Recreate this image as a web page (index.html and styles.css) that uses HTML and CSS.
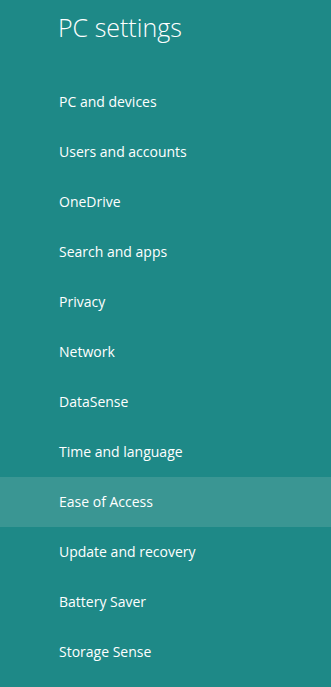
FILE: index.html
```html
<!DOCTYPE html>
<html>
<head>
<meta charset="utf-8">
<link rel="stylesheet" href="styles.css">
</head>
<body>
<div class="pane">
  <h1 class="title">PC settings</h1>
  <ul class="menu">
    <li class="item">PC and devices</li>
    <li class="item">Users and accounts</li>
    <li class="item">OneDrive</li>
    <li class="item">Search and apps</li>
    <li class="item">Privacy</li>
    <li class="item">Network</li>
    <li class="item">DataSense</li>
    <li class="item">Time and language</li>
    <li class="item selected">Ease of Access</li>
    <li class="item">Update and recovery</li>
    <li class="item">Battery Saver</li>
    <li class="item">Storage Sense</li>
  </ul>
</div>
</body>
</html>
```
FILE: styles.css
```css
html, body {
  margin: 0;
  padding: 0;
  background: #1e8987;
  height: 100%;
  overflow: hidden;
}
.pane {
  font-family: "Open Sans", "Noto Sans", sans-serif;
  color: #ffffff;
}
.title {
  margin: 0;
  padding: 9px 0 0 58px;
  height: 77px;
  box-sizing: border-box;
  font-size: 25px;
  font-weight: 300;
  line-height: 36px;
}
.menu {
  list-style: none;
  margin: 0;
  padding: 0;
}
.item {
  height: 50px;
  line-height: 50px;
  padding-left: 59px;
  font-size: 14px;
}
.selected {
  background: #3a9693;
}
```
